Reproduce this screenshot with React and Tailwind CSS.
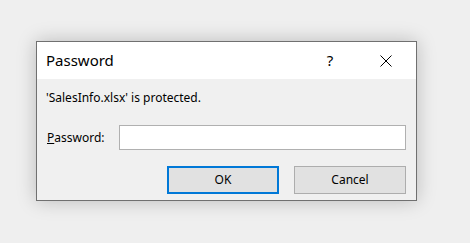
export default function App() {
    return (
        <div className="w-[470px] h-[243px] bg-[#efefef] pt-[41px] pl-[36px]" style={{ fontFamily: '"Noto Sans", "Open Sans", sans-serif' }}>
            <div className="w-[381px] h-[160px] border border-[#707070] bg-[#f0f0f0] shadow-[0_0_18px_rgba(0,0,0,0.22)] flex flex-col">
                {/* barra de titulo */}
                <div className="h-[37px] bg-white flex items-center pl-[9px] text-[15px] text-black">
                    <span className="flex-1">Password</span>
                    <span className="w-[16px] text-center text-[15px] mr-[42px]">?</span>
                    <svg width="12" height="12" viewBox="0 0 12 12" className="mr-[24px]">
                        <path d="M0.5 0.5 L11.5 11.5 M11.5 0.5 L0.5 11.5" stroke="#000" strokeWidth="1" />
                    </svg>
                </div>

                <div className="flex-1 px-[9px] pt-[11px] text-[12px] text-black">
                    <div className="leading-[16px]">'SalesInfo.xlsx' is protected.</div>

                    <div className="flex items-center mt-[19px]">
                        <label className="w-[73px] pl-[1px]">
                            <span className="underline">P</span>assword:
                        </label>
                        <div className="w-[287px] h-[25px] bg-white border border-[#b0b0b0]"></div>
                    </div>

                    <div className="flex justify-end gap-[15px] mt-[16px] pr-[1px]">
                        <button className="w-[112px] h-[28px] bg-[#e1e1e1] border-2 border-[#0078d7] text-[12px]">OK</button>
                        <button className="w-[112px] h-[28px] bg-[#e1e1e1] border border-[#adadad] text-[12px]">Cancel</button>
                    </div>
                </div>
            </div>
        </div>
    );
}
